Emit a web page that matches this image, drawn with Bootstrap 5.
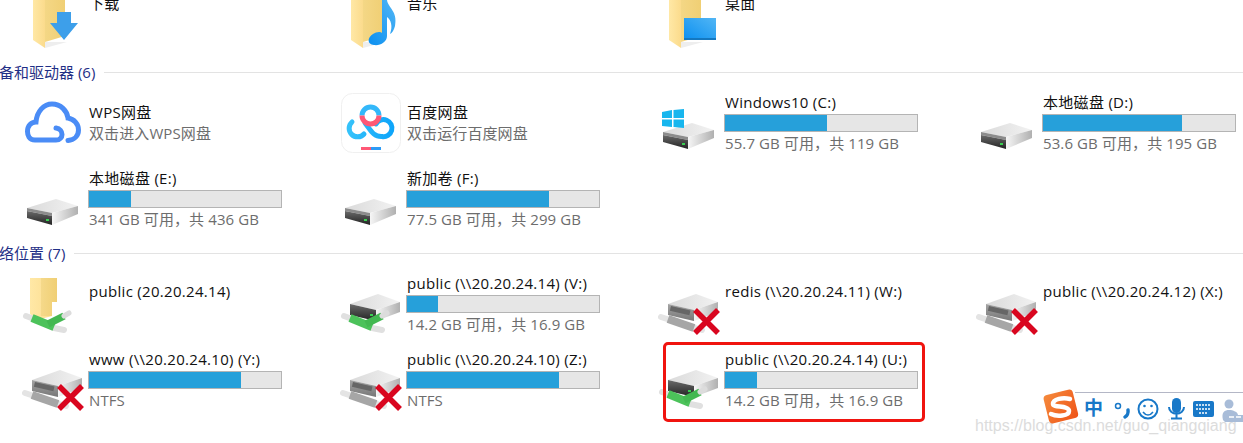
<!DOCTYPE html>
<html lang="zh-CN"><head><meta charset="utf-8"><title>此电脑</title>
<link href="https://cdn.jsdelivr.net/npm/bootstrap@5.3.0/dist/css/bootstrap.min.css" rel="stylesheet">
<style>
html,body{margin:0;background:#fff;overflow:hidden}
body{font-family:"Open Sans","Noto Sans CJK SC",sans-serif;font-size:15px}
.shell{position:relative;width:1243px;height:443px;overflow:hidden}
.flowbox{margin-top:-22px}
.tile-grid{display:grid;grid-template-columns:repeat(4,318px)}
.tile{height:76px;display:flex;align-items:center;padding-left:22px;gap:3px}
.tile svg{flex:none;width:64px;height:64px}
.tile-body{width:194px;color:#6d6d6d;line-height:20px;white-space:nowrap;padding-bottom:2px}
.tile-name{color:#111;letter-spacing:.3px}
.tile-sub{margin-top:1px;letter-spacing:.1px}
.tile-body.solo{padding-bottom:26px}
.meter{height:18px;border:1px solid #b4b4b4;background:#e6e6e6;margin:2px 0 0 -1px;width:194px}
.meter-fill{height:100%;background:#26a0da}
.group-head{display:flex;align-items:center;gap:9px;color:#1f2f86;font-size:15px;height:31px;padding-top:5px;margin-left:-1px}
.group-head.second{height:29px;padding-top:3px}
.group-head::after{content:"";flex:1;height:1px;background:#e3e3e3}
.pick{position:absolute;left:663px;top:342px;width:262px;height:80px;border:3px solid #f0140f;border-radius:5px}
.ime{position:absolute;left:1043px;top:389px;width:200px;height:38px}
.wm{position:absolute;left:975px;top:419px;color:#dcdcdc;font-size:16px;line-height:13px;white-space:nowrap;font-family:"Liberation Sans",sans-serif}
.ime-zh{position:absolute;left:1084px;top:399px;color:#1878c8;font-size:19px;font-weight:700;line-height:18px}
</style></head><body>
<svg width="0" height="0" class="position-absolute">
<defs>
<linearGradient id="gF" x1="0" x2="1"><stop offset="0" stop-color="#f5d98a"/><stop offset="1" stop-color="#f0cf74"/></linearGradient>
<linearGradient id="gL" x1="0" x2="1"><stop offset="0" stop-color="#ffe8a6"/><stop offset="1" stop-color="#fbdb8c"/></linearGradient>
<linearGradient id="gB" x1="0" x2="1" y1="1" y2="0"><stop offset="0" stop-color="#0a8ff0"/><stop offset="1" stop-color="#52b6f5"/></linearGradient>
<linearGradient id="gT" x1="0" x2="1"><stop offset="0" stop-color="#dadada"/><stop offset="1" stop-color="#f2f2f2"/></linearGradient>
<linearGradient id="gS" x1="0" x2="1"><stop offset="0" stop-color="#f6f6f6"/><stop offset="1" stop-color="#b0b0b0"/></linearGradient>
<linearGradient id="gD" x1="0" x2="0" y1="0" y2="1"><stop offset="0" stop-color="#6a6a6a"/><stop offset="1" stop-color="#222"/></linearGradient>
<linearGradient id="gM" x1="0" x2="0" y1="0" y2="1"><stop offset="0" stop-color="#a4a4a4"/><stop offset="1" stop-color="#777"/></linearGradient>
<linearGradient id="gC" x1="0" x2="1"><stop offset="0" stop-color="#35c2fa"/><stop offset="1" stop-color="#0ea5fa"/></linearGradient>
<linearGradient id="gO" x1="0" x2="1" y1="0" y2="1"><stop offset="0" stop-color="#f58a3c"/><stop offset="1" stop-color="#ef5418"/></linearGradient>
<symbol id="folder" viewBox="0 0 64 64"><path d="M18 -8H43V52L23 58Z" fill="url(#gF)"/><path d="M11 -8L23 -8V64L11 56Z" fill="url(#gL)"/><path d="M23 64L45 58H23Z" fill="#eee"/></symbol>
<symbol id="disk" viewBox="0 0 64 64">
<path d="M5 41L34 32L56 39L30 46Z" fill="url(#gT)"/>
<path d="M5 41L30 46V49L5 44Z" fill="#8c8c8c"/>
<path d="M5 44L30 49V58L5 51Z" fill="url(#gD)"/>
<path d="M30 46L56 39V47L30 58Z" fill="url(#gS)"/>
<rect x="24" y="52" width="3" height="2" fill="#38d050"/>
</symbol>
<symbol id="netdisk" viewBox="0 0 64 64">
<path d="M10 32L38 22L60 30L36 38Z" fill="url(#gT)"/>
<path d="M10 32L36 38V49L10 43Z" fill="url(#gD)"/>
<path d="M36 38L60 30V40L36 49Z" fill="url(#gS)"/>
<rect x="30" y="42" width="3" height="2" fill="#38d050"/>
</symbol>
<symbol id="netoff" viewBox="0 0 64 64">
<path d="M10 32L38 22L60 30L36 38Z" fill="url(#gT)"/>
<path d="M10 32L36 38V49L10 43Z" fill="url(#gM)"/>
<path d="M36 38L60 30V40L36 49Z" fill="url(#gS)"/>
<rect x="13" y="34" width="20" height="5" transform="rotate(13 13 34)" fill="#666"/>
</symbol>
<symbol id="pipeG" viewBox="0 0 64 64">
<path d="M4 44L12 47M32 56L42 58" stroke="#e0e0e0" stroke-width="6" stroke-linecap="round"/>
<path d="M10 46L32 55" stroke="#4cc25a" stroke-width="8"/>
<path d="M26 52L42 44" stroke="#43b851" stroke-width="7"/>
<path d="M42 44L47 41" stroke="#dcdcdc" stroke-width="5" stroke-linecap="round"/>
</symbol>
<symbol id="pipeS" viewBox="0 0 64 64">
<path d="M3 45L12 48M34 55L44 58" stroke="#e4e4e4" stroke-width="6" stroke-linecap="round"/>
<path d="M10 47L36 56" stroke="#a6a6a6" stroke-width="8"/>
</symbol>
<symbol id="cross" viewBox="0 0 64 64"><path d="M37 38L60 61M60 38L37 61" stroke="#d9061f" stroke-width="5.500"/></symbol>
</defs></svg>

<div class="shell">
<div class="flowbox">
<div class="tile-grid">
<div class="tile"><svg viewBox="0 0 64 64" aria-hidden="true"><use href="#folder"/><path d="M35 28H49V39H56L42 56L28 39H35Z" fill="#3d9fea"/></svg><div class="tile-body solo"><div class="tile-name">下载</div></div></div>
<div class="tile"><svg viewBox="0 0 64 64" aria-hidden="true"><use href="#folder"/><path d="M42 16L47 16C48 24 58 27 55 42C54 46 52 49 50 50C53 42 51 36 47 33V52C47 58 40 62 34 61C27 60 27 54 33 50C36 48 40 47 42 49Z" fill="url(#gB)"/></svg><div class="tile-body solo"><div class="tile-name">音乐</div></div></div>
<div class="tile"><svg viewBox="0 0 64 64" aria-hidden="true"><use href="#folder"/><rect x="26" y="34" width="32" height="22" fill="url(#gB)"/><rect x="26" y="54" width="32" height="2" fill="#1478c0"/></svg><div class="tile-body solo"><div class="tile-name">桌面</div></div></div>
</div>

<div class="group-head"><span>备和驱动器 (6)</span></div>
<div class="tile-grid">
<div class="tile"><svg viewBox="0 0 64 64" aria-hidden="true"><path d="M34 49H13C7 49 5.500 44 5.500 40.500C5.500 35 9 31 14 31C15 20 22 13 30 13C39 13 45 20 46 27C52 28 56.500 33 56.500 39C56.500 45 52 49 46 49.500M34 49C42 49 42 38 34 37" fill="none" stroke="#4a8cf6" stroke-width="5" stroke-linecap="round"/></svg><div class="tile-body"><div class="tile-name">WPS网盘</div><div class="tile-sub">双击进入WPS网盘</div></div></div>
<div class="tile"><svg viewBox="0 0 64 64" aria-hidden="true"><rect x="1.500" y="2.500" width="59" height="59" rx="11" fill="#fff" stroke="#f0f0f0"/><path d="M12 31A8.500 8.500 0 1 0 24 43M25 32C30 38 33 46 42 45.500A8.500 8.500 0 1 0 36 33" fill="none" stroke="url(#gC)" stroke-width="5" stroke-linecap="round"/><path d="M22 24.500A8.500 8.500 0 0 1 39 24.500" fill="none" stroke="#33b8fa" stroke-width="5"/><path d="M22 24.500A8.500 8.500 0 0 0 39 24.500" fill="none" stroke="#ff5876" stroke-width="5"/><rect x="21" y="56" width="10" height="3" fill="#ff5876"/><rect x="31" y="56" width="10" height="3" fill="#2d9bf5"/></svg><div class="tile-body"><div class="tile-name">百度网盘</div><div class="tile-sub">双击运行百度网盘</div></div></div>
<div class="tile"><svg viewBox="0 0 64 64" aria-hidden="true"><use href="#disk"/><path d="M4 21L14 19V27H4ZM15.500 19L26 18V27H15.500ZM4 28.500H14V36L4 35ZM15.500 28.500H26V37L15.500 36Z" fill="#17b6ee"/></svg><div class="tile-body"><div class="tile-name">Windows10 (C:)</div><div class="meter"><div class="meter-fill" style="width:53%"></div></div><div class="tile-sub">55.7 GB 可用，共 119 GB</div></div></div>
<div class="tile"><svg viewBox="0 0 64 64" aria-hidden="true"><use href="#disk"/></svg><div class="tile-body"><div class="tile-name">本地磁盘 (D:)</div><div class="meter"><div class="meter-fill" style="width:72.500%"></div></div><div class="tile-sub">53.6 GB 可用，共 195 GB</div></div></div>
<div class="tile"><svg viewBox="0 0 64 64" aria-hidden="true"><use href="#disk"/></svg><div class="tile-body"><div class="tile-name">本地磁盘 (E:)</div><div class="meter"><div class="meter-fill" style="width:22%"></div></div><div class="tile-sub">341 GB 可用，共 436 GB</div></div></div>
<div class="tile"><svg viewBox="0 0 64 64" aria-hidden="true"><use href="#disk"/></svg><div class="tile-body"><div class="tile-name">新加卷 (F:)</div><div class="meter"><div class="meter-fill" style="width:74%"></div></div><div class="tile-sub">77.5 GB 可用，共 299 GB</div></div></div>
</div>

<div class="group-head second"><span>络位置 (7)</span></div>
<div class="tile-grid">
<div class="tile"><svg viewBox="0 0 64 64" aria-hidden="true"><path d="M8 6H35V30H30V44L15 48L8 42Z" fill="url(#gL)"/><path d="M19 6H35V30H30V44H19Z" fill="url(#gF)"/><use href="#pipeG"/></svg><div class="tile-body solo"><div class="tile-name">public (20.20.24.14)</div></div></div>
<div class="tile"><svg viewBox="0 0 64 64" aria-hidden="true"><use href="#netdisk"/><use href="#pipeG"/></svg><div class="tile-body"><div class="tile-name">public (\\20.20.24.14) (V:)</div><div class="meter"><div class="meter-fill" style="width:16%"></div></div><div class="tile-sub">14.2 GB 可用，共 16.9 GB</div></div></div>
<div class="tile"><svg viewBox="0 0 64 64" aria-hidden="true"><use href="#netoff"/><use href="#pipeS"/><use href="#cross"/></svg><div class="tile-body solo"><div class="tile-name">redis (\\20.20.24.11) (W:)</div></div></div>
<div class="tile"><svg viewBox="0 0 64 64" aria-hidden="true"><use href="#netoff"/><use href="#pipeS"/><use href="#cross"/></svg><div class="tile-body solo"><div class="tile-name">public (\\20.20.24.12) (X:)</div></div></div>
<div class="tile"><svg viewBox="0 0 64 64" aria-hidden="true"><use href="#netoff"/><use href="#pipeS"/><use href="#cross"/></svg><div class="tile-body"><div class="tile-name">www (\\20.20.24.10) (Y:)</div><div class="meter"><div class="meter-fill" style="width:79%"></div></div><div class="tile-sub">NTFS</div></div></div>
<div class="tile"><svg viewBox="0 0 64 64" aria-hidden="true"><use href="#netoff"/><use href="#pipeS"/><use href="#cross"/></svg><div class="tile-body"><div class="tile-name">public (\\20.20.24.10) (Z:)</div><div class="meter"><div class="meter-fill" style="width:79%"></div></div><div class="tile-sub">NTFS</div></div></div>
<div class="tile"><svg viewBox="0 0 64 64" aria-hidden="true"><use href="#netdisk"/><use href="#pipeG"/></svg><div class="tile-body"><div class="tile-name">public (\\20.20.24.14) (U:)</div><div class="meter"><div class="meter-fill" style="width:16.500%"></div></div><div class="tile-sub">14.2 GB 可用，共 16.9 GB</div></div></div>
</div>
</div>

<div class="pick"></div>
<div class="wm">https://blog.csdn.net/guo_qiangqiang</div>
<svg class="ime" viewBox="0 0 200 38" aria-hidden="true">
<path d="M32 3.500H200" stroke="#b4b7c6"/>
<rect x="3" y="3" width="30" height="29" rx="4" fill="url(#gO)" transform="rotate(-14 18 18)"/>
<path d="M27 10C20 8 10 10 10 15C10 19 26 16 26 22C26 27 14 28 8 25" fill="none" stroke="#fff" stroke-width="4.500" stroke-linecap="round"/>
<circle cx="75" cy="17" r="2.500" fill="none" stroke="#1878c8" stroke-width="1.500"/>
<path d="M85 21C85.500 24 84 27 82 28" fill="none" stroke="#1878c8" stroke-width="3.500" stroke-linecap="round"/>
<circle cx="105" cy="20" r="9.500" fill="none" stroke="#1878c8" stroke-width="2"/><circle cx="101.500" cy="17" r="1.300" fill="#1878c8"/><circle cx="108.500" cy="17" r="1.300" fill="#1878c8"/><path d="M100 23C103 27 107 27 110 23" fill="none" stroke="#1878c8" stroke-width="1.500"/>
<rect x="129" y="9" width="9" height="15" rx="4.500" fill="#1878c8"/><path d="M126 18C126 27 141 27 141 18M133.500 25V29M128 29.500H139" fill="none" stroke="#1878c8" stroke-width="2"/>
<rect x="150" y="12" width="21" height="16" rx="2" fill="#1878c8"/><path d="M153 16H168M153 20H168M156 24H165" stroke="#fff" stroke-width="1.500" stroke-dasharray="2 1"/>
<circle cx="186" cy="15" r="4.500" fill="#a8bcd8"/><path d="M180 31C178 23 182 21 186 21C190 21 195 23 195 26H200V33H182Z" fill="#a8bcd8"/><path d="M186 28H191M193 28H198" stroke="#fff" stroke-width="1.500"/>
</svg>
<div class="ime-zh">中</div>
</div>
</body></html>
